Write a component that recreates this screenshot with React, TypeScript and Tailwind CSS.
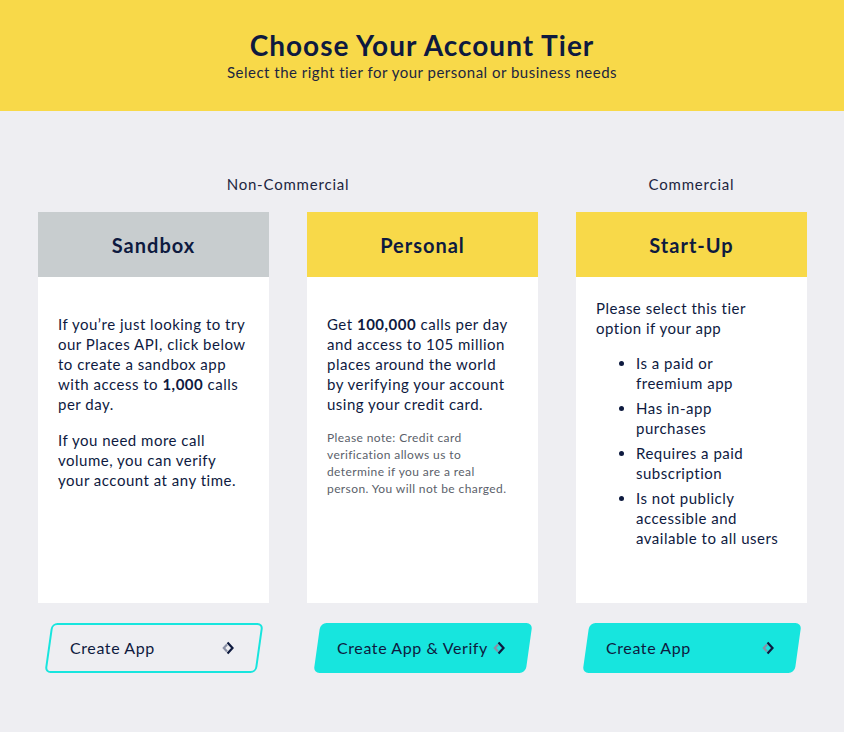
import React from "react";

const font = { fontFamily: "Lato, 'Noto Sans', sans-serif" };

function Arrow() {
  return (
    <svg width="12" height="16" viewBox="0 0 12 16" fill="none">
      <path d="M5 4.5 L1.8 8 L5 11.5" stroke="#8a90a6" strokeWidth="2.2" strokeLinejoin="miter" />
      <path d="M5.5 2.5 L10.5 8 L5.5 13.5" stroke="#0e1a3f" strokeWidth="2.2" strokeLinejoin="miter" />
    </svg>
  );
}

function Btn({ label, outline }: { label: string; outline?: boolean }) {
  return (
    <div className="flex justify-center mt-5">
      <button
        className={
          "-skew-x-[8deg] w-[212px] h-[50px] rounded-[6px] flex items-center " +
          (outline ? "border-2 border-[#17e5de] bg-transparent" : "bg-[#17e5de]")
        }
      >
        <span className="skew-x-[8deg] flex w-full items-center justify-between pl-[20px] pr-[24px] text-[16px] tracking-[0.6px] text-[#0e1a3f]">
          <span>{label}</span>
          <Arrow />
        </span>
      </button>
    </div>
  );
}

function Card({
  title,
  head,
  children,
}: {
  title: string;
  head: string;
  children: React.ReactNode;
}) {
  return (
    <div className="bg-white h-[391px] flex flex-col">
      <div className={"h-[65px] flex items-center justify-center " + head}>
        <h2 className="text-[20px] font-bold text-[#0e1a3f] tracking-[1px]">{title}</h2>
      </div>
      <div className="flex-1 pl-5 text-[15px] leading-[20px] tracking-[0.5px] text-[#0e1a3f]">{children}</div>
    </div>
  );
}

export default function App() {
  return (
    <div className="min-h-screen bg-[#eeeef2] w-[844px] h-[732px]" style={font}>
      <header className="bg-[#f8d949] h-[111px] flex flex-col items-center pt-[28px]">
        <h1 className="text-[28px] leading-[34px] font-bold tracking-[1px] text-[#0e1a3f]">Choose Your Account Tier</h1>
        <p className="text-[15px] leading-[20px] tracking-[0.5px] text-[#1c2540]">
          Select the right tier for your personal or business needs
        </p>
      </header>
      <div className="px-[38px] pt-[63px]">
        <div className="grid grid-cols-[231px_231px_231px] gap-x-[38px]">
          <div className="col-span-2 text-center text-[15px] tracking-[0.8px] text-[#1c2540] leading-[20px] h-[38px]">Non-Commercial</div>
          <div className="text-center text-[15px] tracking-[0.8px] text-[#1c2540] leading-[20px] h-[38px]">Commercial</div>

          <div>
            <Card title="Sandbox" head="bg-[#c8cdcf]">
              <div className="pt-[37px] pr-5">
                <p>
                  If you’re just looking to try our Places API, click below to create a sandbox app with access to{" "}
                  <b>1,000</b> calls per day.
                </p>
                <p className="mt-4">If you need more call volume, you can verify your account at any time.</p>
              </div>
            </Card>
            <Btn label="Create App" outline />
          </div>

          <div>
            <Card title="Personal" head="bg-[#f8d949]">
              <div className="pt-[37px] pr-[26px]">
                <p>
                  Get <b>100,000</b> calls per day and access to 105 million places around the world by verifying your
                  account using your credit card.
                </p>
                <p className="mt-[15px] text-[12px] leading-[17px] tracking-[0.4px] text-[#5b5f6b]">
                  Please note: Credit card verification allows us to determine if you are a real person. You will not be
                  charged.
                </p>
              </div>
            </Card>
            <Btn label="Create App & Verify" />
          </div>

          <div>
            <Card title="Start-Up" head="bg-[#f8d949]">
              <div className="pt-[21px] pr-5">
                <p>Please select this tier option if your app</p>
                <ul className="mt-[15px] pl-10 pr-[7px] list-disc marker:text-[#0e1a3f] space-y-[5px]">
                  <li>Is a paid or freemium app</li>
                  <li>Has in-app purchases</li>
                  <li>Requires a paid subscription</li>
                  <li>Is not publicly accessible and available to all users</li>
                </ul>
              </div>
            </Card>
            <Btn label="Create App" />
          </div>
        </div>
      </div>
    </div>
  );
}
